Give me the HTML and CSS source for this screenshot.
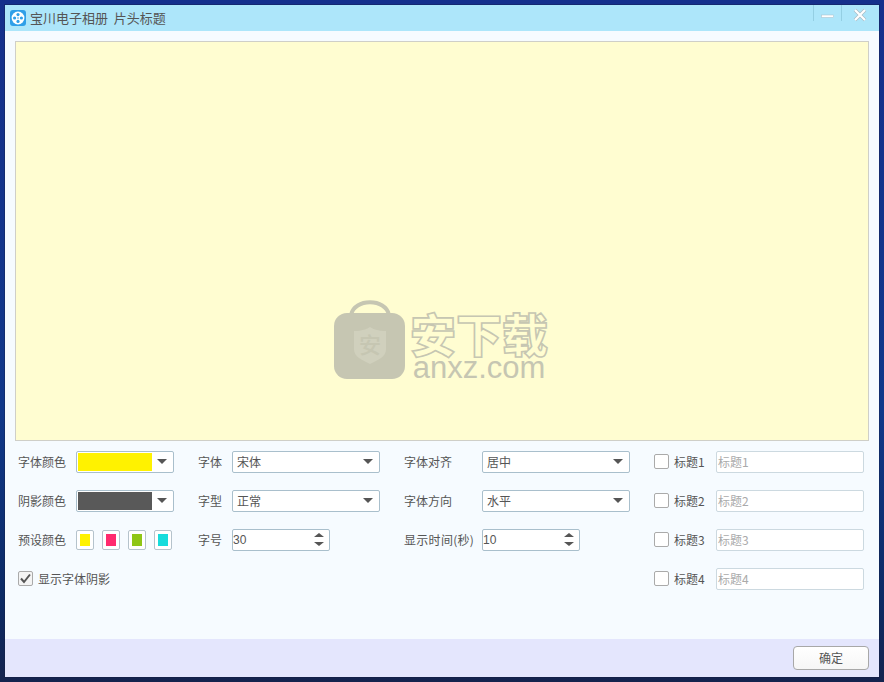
FILE: index.html
```html
<!DOCTYPE html>
<html lang="zh-CN">
<head>
<meta charset="utf-8">
<title>片头标题</title>
<link rel="stylesheet" href="styles.css">
</head>
<body>
<main class="window">
  <header class="titlebar">
    <svg class="logo" width="16" height="16" viewBox="0 0 16 16">
      <rect x="0" y="0" width="16" height="16" rx="3" fill="#2f9fe8"/>
      <circle cx="8" cy="8" r="6.4" fill="#fff"/>
      <circle cx="8" cy="4.6" r="1.6" fill="#2f9fe8"/>
      <circle cx="8" cy="11.4" r="1.6" fill="#2f9fe8"/>
      <circle cx="4.6" cy="8" r="1.6" fill="#2f9fe8"/>
      <circle cx="11.4" cy="8" r="1.6" fill="#2f9fe8"/>
      <circle cx="8" cy="8" r="0.8" fill="#2f9fe8"/>
    </svg>
    <h1 class="title">宝川电子相册&nbsp;&nbsp;片头标题</h1>
    <div class="winbtns">
      <div class="winbtn">
        <svg width="14" height="14" viewBox="0 0 14 14"><rect x="0.5" y="9" width="12" height="2.4" fill="#fff" stroke="#a9bcc6" stroke-width="0.5"/></svg>
      </div>
      <div class="winbtn closebtn">
        <svg width="16" height="16" viewBox="0 0 16 16"><path d="M3 3 L13 13 M13 3 L3 13" stroke="#a9bcc6" stroke-width="3.6"/><path d="M3 3 L13 13 M13 3 L3 13" stroke="#fff" stroke-width="2.2"/></svg>
      </div>
    </div>
  </header>

  <section class="content">
    <div class="preview">
      <div class="watermark">
        <svg class="bag" width="72" height="82" viewBox="0 0 72 82">
          <path d="M17 16 C20 -1 52 -1 55 16" fill="none" stroke="#c6c6b2" stroke-width="4"/>
          <rect x="0" y="14" width="71" height="66" rx="13" fill="#c6c6b2"/>
          <path d="M20 32 C28 32 33 30 36 28 C39 30 44 32 52 32 L52 50 C52 58 44 61 36 65 C28 61 20 58 20 50 Z" fill="#d0d0bd"/>
          <text x="36" y="54" text-anchor="middle" class="bagtext">安</text>
        </svg>
        <div class="brand">
          <span class="brand-cn">安下载</span>
          <span class="brand-en">anxz.com</span>
        </div>
      </div>
    </div>

    <div class="form">
      <div class="row">
        <div class="cell c1"><span class="lab w1">字体颜色</span>
          <div class="combo colorcombo"><span class="fill yellow"></span><span class="arrow"></span></div></div>
        <div class="cell c2"><span class="lab w2">字体</span>
          <div class="combo wide"><span class="val">宋体</span><span class="arrow"></span></div></div>
        <div class="cell c3"><span class="lab w3">字体对齐</span>
          <div class="combo wide"><span class="val">居中</span><span class="arrow"></span></div></div>
        <div class="cell c4"><span class="check"></span><span class="lab w4">标题1</span>
          <div class="titleinput">标题1</div></div>
      </div>
      <div class="row">
        <div class="cell c1"><span class="lab w1">阴影颜色</span>
          <div class="combo colorcombo"><span class="fill gray"></span><span class="arrow"></span></div></div>
        <div class="cell c2"><span class="lab w2">字型</span>
          <div class="combo wide"><span class="val">正常</span><span class="arrow"></span></div></div>
        <div class="cell c3"><span class="lab w3">字体方向</span>
          <div class="combo wide"><span class="val">水平</span><span class="arrow"></span></div></div>
        <div class="cell c4"><span class="check"></span><span class="lab w4">标题2</span>
          <div class="titleinput">标题2</div></div>
      </div>
      <div class="row">
        <div class="cell c1"><span class="lab w1">预设颜色</span>
          <div class="swatches">
            <span class="swatch"><i class="yellow"></i></span>
            <span class="swatch"><i class="pink"></i></span>
            <span class="swatch"><i class="green"></i></span>
            <span class="swatch"><i class="cyan"></i></span>
          </div></div>
        <div class="cell c2"><span class="lab w2">字号</span>
          <div class="spin"><span class="num">30</span><span class="updown"><b class="up"></b><b class="down"></b></span></div></div>
        <div class="cell c3"><span class="lab w3 timelab">显示时间(秒)</span>
          <div class="spin"><span class="num">10</span><span class="updown"><b class="up"></b><b class="down"></b></span></div></div>
        <div class="cell c4"><span class="check"></span><span class="lab w4">标题3</span>
          <div class="titleinput">标题3</div></div>
      </div>
      <div class="row">
        <div class="cell c1 span3"><span class="check on">
          <svg width="13" height="13" viewBox="0 0 13 13"><path d="M2 6.5 L5 10 L11 2.5" fill="none" stroke="#555" stroke-width="2"/></svg>
        </span><span class="lab shadow">显示字体阴影</span></div>
        <div class="cell c4"><span class="check"></span><span class="lab w4">标题4</span>
          <div class="titleinput">标题4</div></div>
      </div>
    </div>
  </section>

  <footer class="footer"><div class="okbtn">确定</div></footer>
</main>
</body>
</html>
```
FILE: styles.css
```css
* { box-sizing: border-box; }
html, body { margin: 0; height: 100%; }
body {
  padding: 5px;
  height: 682px;
  overflow: hidden;
  background: linear-gradient(180deg, #15308c 0%, #10388a 60%, #0c2a64 88%, #14234e 100%);
  font-family: "Noto Sans CJK SC", "Liberation Sans", sans-serif;
  font-size: 12px;
  color: #555;
}
.window {
  height: 672px;
  display: flex;
  flex-direction: column;
  background: #f6fbff;
  box-shadow: 0 0 0 1px rgba(20, 30, 60, .35);
}
.titlebar {
  height: 26px;
  flex: none;
  display: flex;
  align-items: flex-start;
  background: #ade6fa;
  padding-left: 5px;
}
.logo { margin-top: 5px; flex: none; }
.title {
  margin: 4px 0 0 4px;
  font-size: 13px;
  font-weight: 400;
  line-height: 18px;
  color: #555;
}
.winbtns { margin-left: auto; display: flex; padding-right: 10px; }
.winbtn {
  width: 28px;
  height: 16px;
  display: flex;
  justify-content: center;
  align-items: center;
  border-left: 1px solid #94cfe3;
}
.closebtn { padding: 3px 0 0 9px; overflow: visible; }
.closebtn svg { flex: none; }
.content { flex: 1; padding: 10px 10px 0; }
.preview {
  height: 400px;
  background: #fffdd1;
  border: 1px solid #cfcfc8;
  display: flex;
  justify-content: center;
  align-items: flex-start;
}
.watermark { display: flex; gap: 4px; margin: 257px 2px 0 0; }
.bag { flex: none; }
.bagtext { font-size: 22px; fill: #c6c6b2; font-family: "Noto Sans CJK SC", sans-serif; font-weight: 500; }
.brand { display: flex; flex-direction: column; width: 138px; align-items: center; margin-top: 10px; }
.brand-cn {
  font-size: 46px;
  line-height: 46px;
  font-weight: 900;
  color: #fffdd1;
  -webkit-text-stroke: 1.6px #c6c6b2;
  white-space: nowrap;
}
.brand-en {
  font-family: "Liberation Sans", sans-serif;
  font-size: 31px;
  line-height: 24px;
  margin-top: 1px;
  color: #c6c6b2;
}
.form { padding: 1px 0 0 3px; }
.row { display: flex; height: 39px; align-items: center; }
.cell { display: flex; align-items: center; flex: none; }
.c1 { width: 180px; }
.c2 { width: 206px; }
.c3 { width: 250px; }
.span3 { width: 636px; }
.lab { flex: none; line-height: 22px; white-space: nowrap; }
.w1 { width: 58px; }
.w2 { width: 34px; }
.w3 { width: 78px; }
.w4 { width: 42px; }
.timelab { letter-spacing: .3px; }
.shadow { margin-left: 5px; }
.combo, .spin {
  height: 22px;
  background: #fff;
  border: 1px solid #a9bfcc;
  border-radius: 2px;
  display: flex;
  align-items: center;
  position: relative;
}
.colorcombo { width: 98px; padding-left: 1px; }
.wide { width: 148px; padding-left: 4px; }
.fill { width: 74px; height: 18px; }
.yellow { background: #fff200; }
.gray { background: #595959; }
.pink { background: #ff2a6e; }
.green { background: #8fc616; }
.cyan { background: #16dcdc; }
.val { flex: 1; }
.arrow {
  margin-left: auto;
  margin-right: 6px;
  width: 0;
  height: 0;
  border-left: 5px solid transparent;
  border-right: 5px solid transparent;
  border-top: 5px solid #555;
}
.swatches { display: flex; gap: 8px; }
.swatch {
  width: 18px;
  height: 20px;
  padding: 3px;
  border: 1px solid #b5c3cc;
  border-radius: 2px;
  background: #fff;
  display: block;
}
.swatch i { display: block; width: 100%; height: 100%; }
.spin { width: 98px; padding-left: 0; }
.num { font-family: "Liberation Sans", sans-serif; flex: 1; }
.updown { display: flex; flex-direction: column; gap: 5px; margin-right: 5px; }
.updown b { display: block; width: 0; height: 0; border-left: 5px solid transparent; border-right: 5px solid transparent; }
.up { border-bottom: 4px solid #555; }
.down { border-top: 4px solid #555; }
.check {
  flex: none;
  width: 15px;
  height: 15px;
  margin-right: 5px;
  background: #fff;
  border: 1px solid #aaa;
  border-radius: 2px;
  display: block;
}
.check.on { display: flex; align-items: center; justify-content: center; margin-right: 0; background: #f4f4f4; }
.titleinput {
  width: 148px;
  height: 22px;
  background: #fff;
  border: 1px solid #ccd9e0;
  border-radius: 2px;
  color: #aaa;
  line-height: 20px;
  padding-left: 1px;
}
.footer {
  height: 38px;
  flex: none;
  background: #e4e6fd;
  display: flex;
  justify-content: flex-end;
  align-items: flex-start;
  padding: 7px 10px 0 0;
}
.okbtn {
  width: 76px;
  height: 24px;
  background: linear-gradient(#fff, #f6f6f6);
  border: 1px solid #a8a8a8;
  border-radius: 4px;
  text-align: center;
  line-height: 22px;
  color: #555;
}
```
